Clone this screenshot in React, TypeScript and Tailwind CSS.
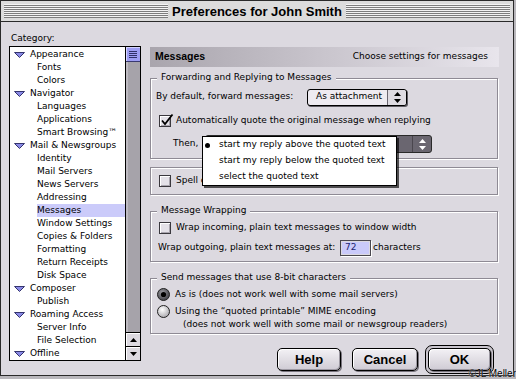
import React from "react";

const items: [string, number][] = [
  ["Appearance", 0], ["Fonts", 1], ["Colors", 1],
  ["Navigator", 0], ["Languages", 1], ["Applications", 1], ["Smart Browsing™", 1],
  ["Mail & Newsgroups", 0], ["Identity", 1], ["Mail Servers", 1], ["News Servers", 1],
  ["Addressing", 1], ["Messages", 1], ["Window Settings", 1], ["Copies & Folders", 1],
  ["Formatting", 1], ["Return Receipts", 1], ["Disk Space", 1],
  ["Composer", 0], ["Publish", 1], ["Roaming Access", 0], ["Server Info", 1],
  ["File Selection", 1], ["Offline", 0],
];

function Tri() {
  return (
    <svg width="11" height="6" viewBox="0 0 11 6" className="shrink-0">
      <polygon points="0.5,0.5 10.5,0.5 5.5,5.5" fill="#8a8ae6" stroke="#34346e" strokeWidth="1" />
    </svg>
  );
}

function Arrows({ color = "#000" }: { color?: string }) {
  return (
    <svg width="7" height="11" viewBox="0 0 7 11">
      <polygon points="3.5,0 7,4 0,4" fill={color} />
      <polygon points="0,7 7,7 3.5,11" fill={color} />
    </svg>
  );
}

function Check({ checked }: { checked?: boolean }) {
  return (
    <div className="relative w-[12px] h-[12px] shrink-0 border border-[#3a383e] bg-[#e4e1e8] shadow-[inset_1px_1px_0_#ffffff,inset_-1px_-1px_0_#a9a5ae]">
      {checked && (
        <svg className="absolute left-[0px] top-[-3px]" width="14" height="14" viewBox="0 0 14 14">
          <path d="M2 7.5 L5 11 L12.5 1.5" fill="none" stroke="#000" strokeWidth="1.8" />
        </svg>
      )}
    </div>
  );
}

function Radio({ on }: { on?: boolean }) {
  return (
    <svg width="13" height="13" viewBox="0 0 13 13" className="shrink-0">
      <defs>
        <radialGradient id={on ? "rg1" : "rg2"} cx="0.4" cy="0.35" r="0.7">
          <stop offset="0" stopColor={on ? "#9a9aa0" : "#ffffff"} />
          <stop offset="1" stopColor={on ? "#3c3c42" : "#a8a6ac"} />
        </radialGradient>
      </defs>
      <circle cx="6.5" cy="6.5" r="6" fill={`url(#${on ? "rg1" : "rg2"})`} stroke="#222" strokeWidth="1" />
      {on && <circle cx="6.5" cy="6.5" r="2.6" fill="#000" />}
    </svg>
  );
}

const legend = "ml-[1px] px-[4px] pb-[3px] leading-[12px] bg-[#dcd9e0]";
const fieldset =
  "border border-[#8e8a94] shadow-[inset_1px_1px_0_#ffffff,1px_1px_0_#ffffff] px-[5px]";
const btn =
  "flex items-center justify-center h-[23px] rounded-[5px] border border-black bg-gradient-to-b from-[#f3f1f5] to-[#cfcbd4] shadow-[inset_1px_1px_0_#ffffff,inset_-1px_-1px_0_#9c98a2,1px_1px_0_#77737c] font-['Liberation_Sans',sans-serif] font-bold text-[13px]";

export default function App() {
  return (
    <div className="relative w-[516px] h-[379px] overflow-hidden bg-[#b9b7bc] font-['DejaVu_Sans',sans-serif] text-[9px] text-black">
      <div className="flex flex-col w-[514px] h-[376px] border border-[#2a2a2a] bg-[#dcd9e0]">
        {/* title bar */}
        <div className="h-[21px] shrink-0 border-b border-[#2a2a2a] bg-[#dcdcdc] px-[3px] pt-[3px]">
          <div className="h-[14px] flex justify-center bg-[image:repeating-linear-gradient(to_bottom,#f4f4f4_0px,#f4f4f4_1px,#7e7e7e_1px,#7e7e7e_2px)]">
            <span className="bg-[#dcdcdc] px-[4px] h-full flex items-center font-['Liberation_Sans',sans-serif] font-bold text-[13px] leading-none">
              Preferences for John Smith
            </span>
          </div>
        </div>

        <div className="flex flex-1 pl-[8px] pt-[10px]">
          {/* left column */}
          <div className="w-[132px] shrink-0 flex flex-col">
            <div className="h-[12px] leading-[12px] pl-[2px]">Category:</div>
            <div className="mt-[2px] h-[315px] flex border border-black bg-white">
              <div className="flex-1 pt-[1px] overflow-hidden">
                {items.map(([label, lvl]) =>
                  lvl === 0 ? (
                    <div key={label} className="h-[13px] flex items-center pl-[4px]">
                      <Tri />
                      <span className="ml-[5px] whitespace-nowrap leading-[13px]">{label}</span>
                    </div>
                  ) : (
                    <div key={label} className="h-[13px] flex pl-[27px]">
                      <span
                        className={`flex-1 whitespace-nowrap leading-[13px] ${
                          label === "Messages" ? "bg-[#cbcbfa]" : ""
                        }`}
                      >
                        {label}
                      </span>
                    </div>
                  )
                )}
              </div>
              {/* scrollbar */}
              <div className="w-[15px] shrink-0 border-l border-black flex flex-col bg-[#a6a3aa]">
                <div className="h-[15px] border-b border-[#3a3a70] bg-[#9d9df4] shadow-[inset_1px_1px_0_#d4d4ff] flex flex-col items-center justify-center gap-[1px]">
                  <div className="w-[8px] h-[1px] bg-[#30306a]" />
                  <div className="w-[8px] h-[1px] bg-[#30306a]" />
                  <div className="w-[8px] h-[1px] bg-[#30306a]" />
                  <div className="w-[8px] h-[1px] bg-[#30306a]" />
                </div>
                <div className="flex-1 shadow-[inset_2px_0_0_#bdbac1]" />
                <div className="h-[14px] border-t border-black bg-[#dcd9e0] shadow-[inset_1px_1px_0_#fff] flex items-center justify-center">
                  <svg width="7" height="4" viewBox="0 0 7 4"><polygon points="3.5,0 7,4 0,4" fill="#000" /></svg>
                </div>
                <div className="h-[14px] border-t border-black bg-[#dcd9e0] shadow-[inset_1px_1px_0_#fff] flex items-center justify-center">
                  <svg width="7" height="4" viewBox="0 0 7 4"><polygon points="0,0 7,0 3.5,4" fill="#000" /></svg>
                </div>
              </div>
            </div>
          </div>

          {/* right column */}
          <div className="ml-[9px] w-[349px] shrink-0 flex flex-col pt-[15px]">
            <div className="h-[20px] shrink-0 flex items-center justify-between pl-[5px] pr-[11px] bg-gradient-to-r from-[#a9a5ad] via-[#c9c5cd] to-[#e8e5ec]">
              <span className="font-['Liberation_Sans',sans-serif] font-bold text-[10.5px]">Messages</span>
              <span>Choose settings for messages</span>
            </div>

            {/* Forwarding fieldset */}
            <fieldset className={`mt-[4px] w-[348px] pb-[5px] ${fieldset}`}>
              <legend className={legend}>Forwarding and Replying to Messages</legend>
              <div className="pt-[2px] h-[20px] flex items-center">
                <span className="w-[151px] whitespace-nowrap">By default, forward messages:</span>
                <div className="w-[100px] h-[17px] flex rounded-[3px] border border-black bg-[#eeebf1] shadow-[1px_1px_0_#5f5c64]">
                  <span className="flex-1 flex items-center pl-[8px]">As attachment</span>
                  <div className="w-[19px] border-l border-[#6a6670] flex items-center justify-center bg-[#dedbe2] rounded-r-[3px]">
                    <Arrows />
                  </div>
                </div>
              </div>
              <div className="mt-[9px] h-[12px] flex items-center pl-[3px]">
                <Check checked />
                <span className="ml-[5px] whitespace-nowrap">Automatically quote the original message when replying</span>
              </div>
              <div className="relative mt-[8px] h-[18px] flex items-center">
                <span className="ml-[17px] w-[32px]">Then,</span>
                <div className="w-[227px] h-[18px] flex rounded-[3px] border border-[#2a2a2a] bg-[#6a6670]">
                  <span className="flex-1" />
                  <div className="w-[19px] border-l border-[#4a464e] flex items-center justify-center">
                    <Arrows color="#ffffff" />
                  </div>
                </div>
                {/* open menu */}
                <div className="absolute left-[46px] top-[1px] w-[195px] h-[50px] border border-black bg-white shadow-[2px_2px_0_rgba(0,0,0,0.65)] z-10">
                  {[
                    "start my reply above the quoted text",
                    "start my reply below the quoted text",
                    "select the quoted text",
                  ].map((t, i) => (
                    <div key={t} className="h-[16px] flex items-center">
                      <div className="w-[16px] pl-[2px] flex items-center">
                        {i === 0 && <div className="w-[5px] h-[5px] rounded-full bg-black" />}
                      </div>
                      <span className="whitespace-nowrap">{t}</span>
                    </div>
                  ))}
                </div>
              </div>
            </fieldset>

            {/* Spell box */}
            <div className={`mt-[8px] w-[348px] h-[28px] pt-[7px] ${fieldset}`}>
              <div className="h-[12px] flex items-center pl-[3px]">
                <Check />
                <span className="ml-[5px] whitespace-nowrap">Spell check messages before sending</span>
              </div>
            </div>

            {/* Message Wrapping */}
            <fieldset className={`mt-[9px] w-[348px] pb-[5px] ${fieldset}`}>
              <legend className={legend}>Message Wrapping</legend>
              <div className="mt-[3px] h-[12px] flex items-center pl-[3px]">
                <Check />
                <span className="ml-[5px] whitespace-nowrap">Wrap incoming, plain text messages to window width</span>
              </div>
              <div className="mt-[6px] h-[16px] flex items-center">
                <span className="pl-[2px] w-[184px] whitespace-nowrap">Wrap outgoing, plain text messages at:</span>
                <div className="w-[31px] h-[16px] border border-[#4a4850] bg-[#dcd9e0] p-[1px] shadow-[1px_1px_0_#ffffff]">
                  <div className="h-full bg-[#cacafa] flex items-center pl-[3px] text-[#1c1c70]">72</div>
                </div>
                <span className="ml-[2px]">characters</span>
              </div>
            </fieldset>

            {/* 8-bit */}
            <fieldset className={`mt-[9px] w-[348px] pb-[2px] ${fieldset}`}>
              <legend className={legend}>Send messages that use 8-bit characters</legend>
              <div className="mt-[2px] h-[13px] flex items-center pl-[1px]">
                <Radio on />
                <span className="ml-[5px] whitespace-nowrap">As is (does not work well with some mail servers)</span>
              </div>
              <div className="mt-[4px] h-[13px] flex items-center pl-[1px]">
                <Radio />
                <span className="ml-[5px] whitespace-nowrap">Using the “quoted printable” MIME encoding</span>
              </div>
              <div className="mt-[1px] h-[12px] flex items-center pl-[27px] whitespace-nowrap">
                (does not work well with some mail or newsgroup readers)
              </div>
            </fieldset>

            {/* buttons */}
            <div className="mt-[11px] flex items-center justify-end pr-[5px]">
              <div className={`w-[64px] ${btn}`}>Help</div>
              <div className={`ml-[11px] w-[66px] ${btn}`}>Cancel</div>
              <div className="ml-[7px] w-[69px] h-[29px] rounded-[7px] border border-black bg-[#c9c5cd] p-[2px]">
                <div className={`w-full ${btn}`}>OK</div>
              </div>
            </div>
          </div>
        </div>
      </div>
      <div className="absolute right-0 bottom-0 leading-[10px] text-[10px] font-['Liberation_Sans',sans-serif] text-black [text-shadow:0_0_1px_#fff]">
        ©JL Meller
      </div>
    </div>
  );
}
